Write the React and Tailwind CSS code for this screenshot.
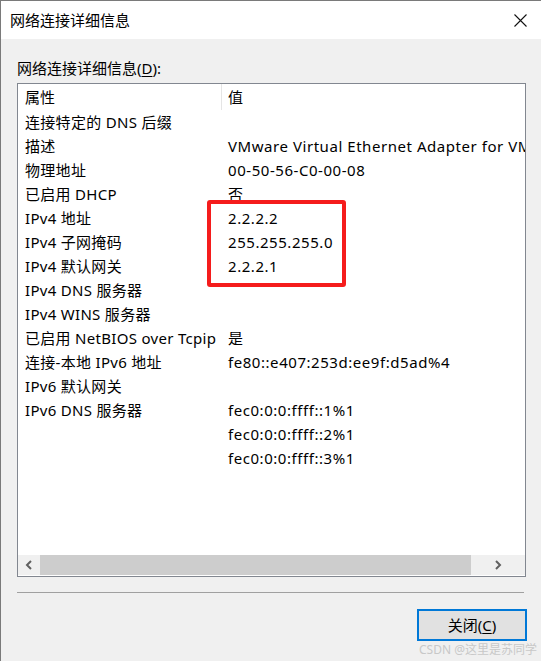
const rows = [
  ['连接特定的 DNS 后缀', ''],
  ['描述', 'VMware Virtual Ethernet Adapter for VMnet8'],
  ['物理地址', '00-50-56-C0-00-08'],
  ['已启用 DHCP', '否'],
  ['IPv4 地址', '2.2.2.2'],
  ['IPv4 子网掩码', '255.255.255.0'],
  ['IPv4 默认网关', '2.2.2.1'],
  ['IPv4 DNS 服务器', ''],
  ['IPv4 WINS 服务器', ''],
  ['已启用 NetBIOS over Tcpip', '是'],
  ['连接-本地 IPv6 地址', 'fe80::e407:253d:ee9f:d5ad%4'],
  ['IPv6 默认网关', ''],
  ['IPv6 DNS 服务器', 'fec0:0:0:ffff::1%1'],
  ['', 'fec0:0:0:ffff::2%1'],
  ['', 'fec0:0:0:ffff::3%1'],
];

function Chevron({ dir }) {
  return (
    <svg width="8" height="10" viewBox="0 0 8 10">
      <path
        d={dir === 'left' ? 'M6 1 L2 5 L6 9' : 'M2 1 L6 5 L2 9'}
        fill="none"
        stroke="#606060"
        strokeWidth="2"
      />
    </svg>
  );
}

export default function App() {
  return (
    <div className="relative w-[541px] h-[661px] bg-[#f0f0f0] border-l border-t border-[#7a7a7a] flex flex-col overflow-hidden text-black font-['Noto_Sans','Noto_Sans_CJK_SC',sans-serif]">
      <div className="h-[38px] bg-white flex items-center justify-between pl-[9px] pr-[14px] shrink-0">
        <span className="text-[15px] leading-[20px]">网络连接详细信息</span>
        <svg width="13" height="13" viewBox="0 0 13 13">
          <path d="M0.5 0.5 L12.5 12.5 M12.5 0.5 L0.5 12.5" stroke="#111" strokeWidth="1.1" />
        </svg>
      </div>

      <div className="flex flex-col pl-[16px] pt-[19px]">
        <div className="text-[15px] leading-[20px] h-[20px] mb-[5px]">
          网络连接详细信息(<span className="underline underline-offset-2">D</span>):
        </div>

        <div className="w-[509px] h-[494px] border border-[#828790] bg-white flex flex-col text-[15px]">
          <div className="h-[26px] flex items-center shrink-0">
            <div className="w-[203px] pl-[7px]">属性</div>
            <div className="w-px h-[26px] bg-[#e5e5e5]" />
            <div className="pl-[6px]">值</div>
          </div>
          <div className="flex-1 overflow-hidden">
            {rows.map(([k, v], i) => (
              <div key={i} className="h-[24px] flex items-center whitespace-nowrap overflow-hidden">
                <div className="w-[204px] pl-[7px] shrink-0 tracking-[0.3px]">{k}</div>
                <div className="pl-[6px] tracking-[0.55px]">{v}</div>
              </div>
            ))}
          </div>
          <div className="h-[20px] mb-px bg-[#f0f0f0] flex items-center shrink-0">
            <div className="w-[22px] h-full flex items-center justify-center">
              <Chevron dir="left" />
            </div>
            <div className="w-[431px] h-full bg-[#cdcdcd]" />
            <div className="flex-1 h-full flex items-center justify-center">
              <Chevron dir="right" />
            </div>
          </div>
        </div>

        <div className="mt-[15px] h-px w-[507px] bg-[#a0a0a0]" />

        <div className="mt-[16px] ml-[400px] w-[110px] h-[32px] border-2 border-[#0078d7] bg-[#e1e1e1] flex items-center justify-center text-[15px]">
          关闭(<span className="underline underline-offset-2">C</span>)
        </div>
      </div>

      <div className="absolute left-[206px] top-[199px] w-[139px] h-[87px] border-[4px] border-[#f51c1c] rounded-[3px]" />

      <div className="absolute right-[4px] bottom-[4px] text-[12px] leading-[14px] text-[#c8c8c8]">
        CSDN @这里是苏同学
      </div>
    </div>
  );
}
